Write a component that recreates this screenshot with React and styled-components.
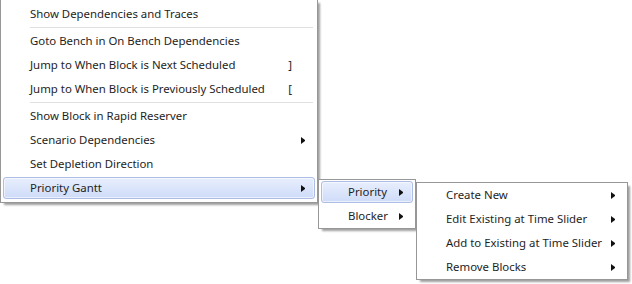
import React from 'react';
import styled, { createGlobalStyle, css } from 'styled-components';

const GlobalStyle = createGlobalStyle`
  html, body {
    margin: 0;
    padding: 0;
    background: #ffffff;
  }
  body {
    font-family: "Noto Sans", "Open Sans", sans-serif;
    font-size: 11.4px;
    color: #1e1e1e;
    overflow: hidden;
  }
  * {
    box-sizing: border-box;
  }
`;

const Cascade = styled.div`
  display: flex;
  align-items: flex-start;
  width: 632px;
  height: 284px;
  overflow: hidden;
`;

const Menu = styled.ul`
  list-style: none;
  display: flex;
  flex-direction: column;
  margin: ${({ $top }) => $top}px 0 0 0;
  padding: ${({ $pad }) => $pad}px 2px;
  width: ${({ $width }) => $width}px;
  flex: none;
  background: #ffffff;
  border: 1px solid #979797;
  box-shadow: 3px 3px 2px -1px rgba(0, 0, 0, 0.38);
  position: relative;
  z-index: ${({ $layer }) => $layer};
`;

const Item = styled.li`
  display: flex;
  align-items: center;
  height: 22px;
  margin: 1px 0;
  padding: 0 9px 0 26px;
  border: 1px solid transparent;
  border-radius: 3px;
  white-space: nowrap;
  line-height: 20px;
  cursor: default;

  ${({ $active }) =>
    $active &&
    css`
      border-color: #aebde3;
      background: linear-gradient(to bottom, #e8eefd 0%, #dbe5fb 50%, #cfdcf8 100%);
      box-shadow: inset 0 0 0 1px rgba(255, 255, 255, 0.55);
    `}
`;

const Label = styled.span`
  flex: 1;
`;

const Shortcut = styled.span`
  margin-left: 12px;
`;

const ArrowSlot = styled.span`
  width: 4px;
  height: 7px;
  margin-left: 9px;
  flex: none;
  border-top: 3.5px solid transparent;
  border-bottom: 3.5px solid transparent;
  border-left: 4px solid ${({ $show }) => ($show ? '#111111' : 'transparent')};
`;

const Separator = styled.li`
  height: 3px;
  margin: 0 2px 0 27px;
  display: flex;
  flex-direction: column;
  justify-content: center;

  &::before {
    content: '';
    display: block;
    height: 1px;
    background: #e0e0e0;
  }
  &::after {
    content: '';
    display: block;
    height: 1px;
    background: #ffffff;
  }
`;

const mainItems = [
  { label: 'Show Dependencies and Traces' },
  { sep: true },
  { label: 'Goto Bench in On Bench Dependencies' },
  { label: 'Jump to When Block is Next Scheduled', shortcut: ']' },
  { label: 'Jump to When Block is Previously Scheduled', shortcut: '[' },
  { sep: true },
  { label: 'Show Block in Rapid Reserver' },
  { label: 'Scenario Dependencies', sub: true },
  { label: 'Set Depletion Direction' },
  { label: 'Priority Gantt', sub: true, active: true },
];

const ganttItems = [
  { label: 'Priority', sub: true, active: true },
  { label: 'Blocker', sub: true },
];

const priorityItems = [
  { label: 'Create New', sub: true },
  { label: 'Edit Existing at Time Slider', sub: true },
  { label: 'Add to Existing at Time Slider', sub: true },
  { label: 'Remove Blocks', sub: true },
];

const MenuList = ({ items, top, pad, width, layer }) => (
  <Menu $top={top} $pad={pad} $width={width} $layer={layer}>
    {items.map((item, i) =>
      item.sep ? (
        <Separator key={i} />
      ) : (
        <Item key={i} $active={item.active}>
          <Label>{item.label}</Label>
          {item.shortcut && <Shortcut>{item.shortcut}</Shortcut>}
          <ArrowSlot $show={item.sub} />
        </Item>
      )
    )}
  </Menu>
);

const App = () => {
  return (
    <>
      <GlobalStyle />
      <Cascade>
        <MenuList items={mainItems} top={-1} pad={2} width={318} layer={1} />
        <MenuList items={ganttItems} top={179} pad={0} width={98} layer={2} />
        <MenuList items={priorityItems} top={182} pad={0} width={212} layer={3} />
      </Cascade>
    </>
  );
};

export default App;
